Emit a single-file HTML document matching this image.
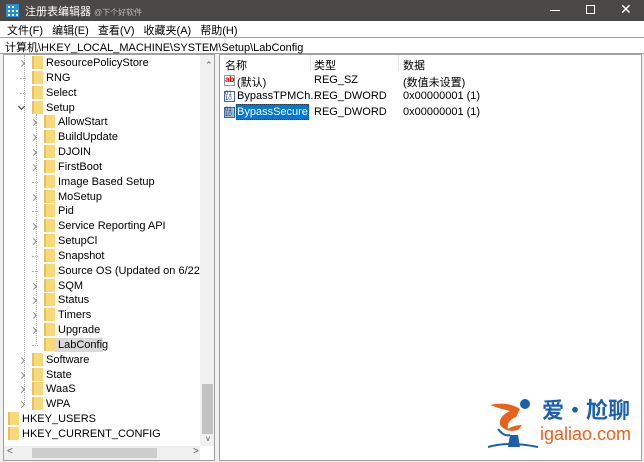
<!DOCTYPE html>
<html><head><meta charset="utf-8"><style>
*{margin:0;padding:0;box-sizing:border-box}
body{width:644px;height:462px;background:#f0f0f0;font-family:"Liberation Sans","Noto Sans CJK SC",sans-serif;font-size:11px;color:#000;position:relative;overflow:hidden}
.a{position:absolute;white-space:nowrap}
.f{position:absolute;width:11px;height:13px;background:#f8d979;border-left:2px solid #e9c15a}
.ch{position:absolute;width:5px;height:5px;border-right:1px solid #888;border-bottom:1px solid #888;transform:rotate(-45deg)}
.cv{position:absolute;width:5px;height:5px;border-right:1px solid #333;border-bottom:1px solid #333;transform:rotate(45deg)}
.hl{position:absolute;width:6px;border-top:1px dotted #aaa}
.t{position:absolute;line-height:15px;white-space:nowrap}
#clip{position:absolute;left:4px;top:55px;width:196px;height:391px;overflow:hidden}
</style></head><body>
<div class="a" style="left:0;top:0;width:644px;height:21px;background:#4a4846"></div>
<svg class="a" style="left:6px;top:4px" width="13" height="13"><rect x="0" y="0" width="13" height="13" fill="#2b8fd6"/><g fill="#fff"><rect x="2" y="2" width="2" height="2"/><rect x="6" y="2" width="2" height="2"/><rect x="2" y="6" width="2" height="2"/><rect x="6" y="6" width="2" height="2"/><rect x="10" y="6" width="2" height="2"/><rect x="2" y="10" width="2" height="2"/><rect x="6" y="10" width="2" height="2"/><rect x="10" y="10" width="2" height="2"/></g></svg>
<div class="a" style="left:25px;top:3px;color:#fff;font-size:11px">注册表编辑器 <span style="font-size:8px;color:#bbb">@下个好软件</span></div>
<div class="a" style="left:550px;top:10px;width:10px;border-top:1px solid #fff"></div>
<div class="a" style="left:586px;top:5px;width:9px;height:9px;border:1px solid #fff"></div>
<div class="a" style="left:620px;top:1px;color:#fff;font-size:14px">✕</div>
<div class="a" style="left:0;top:21px;width:644px;height:16px;background:#fff"></div>
<div class="a" style="left:7px;top:22px;word-spacing:6px">文件(F) 编辑(E) 查看(V) 收藏夹(A) 帮助(H)</div>
<div class="a" style="left:0;top:37px;width:644px;height:17px;background:#fff;border-top:1px solid #a0a0a0;border-bottom:1px solid #a0a0a0"></div>
<div class="a" style="left:5px;top:39px">计算机\HKEY_LOCAL_MACHINE\SYSTEM\Setup\LabConfig</div>
<div class="a" style="left:3px;top:54px;width:212px;height:407px;background:#fff;border:1px solid #a0a0a0"></div>
<div class="a" style="left:200px;top:55px;width:14px;height:391px;background:#f0f0f0"></div>
<div class="a" style="left:202px;top:384px;width:11px;height:50px;background:#c2c2c2"></div>
<div class="a" style="left:205px;top:60px;font-size:9px;color:#555">⌃</div>
<div class="a" style="left:206px;top:434px;font-size:8px;color:#555">v</div>
<div class="a" style="left:4px;top:446px;width:196px;height:14px;background:#f0f0f0"></div>
<div class="a" style="left:32px;top:448px;width:125px;height:10px;background:#cdcdcd"></div>
<div class="a" style="left:7px;top:446px;color:#555;font-size:10px">&lt;</div>
<div class="a" style="left:193px;top:446px;color:#555;font-size:10px">&gt;</div>
<div class="a" style="left:219px;top:54px;width:423px;height:407px;background:#fff;border:1px solid #a0a0a0"></div>
<div class="a" style="left:310px;top:55px;height:16px;border-left:1px solid #e5e5e5"></div>
<div class="a" style="left:398px;top:55px;height:16px;border-left:1px solid #e5e5e5"></div>
<div class="a" style="left:225px;top:57px">名称</div>
<div class="a" style="left:314px;top:57px">类型</div>
<div class="a" style="left:403px;top:57px">数据</div>
<div class="a" style="left:224px;top:75px;width:11px;height:11px;border:1px solid #999;font-size:8px;color:#d00;line-height:8px;font-weight:bold">ab</div>
<div class="a" style="left:237px;top:74px">(默认)</div><div class="a" style="left:314px;top:74px">REG_SZ</div><div class="a" style="left:403px;top:74px">(数值未设置)</div>
<div class="a" style="left:224px;top:91px;width:11px;height:11px;border:1px solid #46a;font-size:6px;color:#236;line-height:5px">01<br>10</div>
<div class="a" style="left:237px;top:90px">BypassTPMCh...</div><div class="a" style="left:314px;top:90px">REG_DWORD</div><div class="a" style="left:403px;top:90px">0x00000001 (1)</div>
<div class="a" style="left:224px;top:107px;width:11px;height:11px;border:1px solid #46a;font-size:6px;color:#236;line-height:5px;background:#9bc">01<br>10</div>
<div class="a" style="left:236px;top:104px;width:73px;height:16px;background:#0078d7;border:1px dotted #333"></div>
<div class="a" style="left:237px;top:106px;color:#fff">BypassSecure...</div><div class="a" style="left:314px;top:106px">REG_DWORD</div><div class="a" style="left:403px;top:106px">0x00000001 (1)</div>
<!-- tree -->
<div id="clip">
<div class="a" style="left:20px;top:0;height:348px;border-left:1px dotted #aaa"></div>
<div class="a" style="left:32px;top:59px;height:230px;border-left:1px dotted #aaa"></div>
<div class="a" style="left:51px;top:283px;width:48px;height:14px;background:#d9d9d9"></div>
<div id="tree"></div>
</div>
<script>
var R=[[1,1,"ResourcePolicyStore"],[1,0,"RNG"],[1,0,"Select"],[1,2,"Setup"],[2,1,"AllowStart"],[2,1,"BuildUpdate"],[2,1,"DJOIN"],[2,1,"FirstBoot"],[2,0,"Image Based Setup"],[2,1,"MoSetup"],[2,0,"Pid"],[2,1,"Service Reporting API"],[2,1,"SetupCl"],[2,0,"Snapshot"],[2,0,"Source OS (Updated on 6/22/202"],[2,1,"SQM"],[2,1,"Status"],[2,1,"Timers"],[2,1,"Upgrade"],[2,0,"LabConfig"],[1,1,"Software"],[1,1,"State"],[1,1,"WaaS"],[1,1,"WPA"],[0,-1,"HKEY_USERS"],[0,-1,"HKEY_CURRENT_CONFIG"]];
var h="";
R.forEach(function(r,i){var y=i*14.84;var fx=r[0]==0?4:(r[0]==1?28:40);var cx=fx-12;
if(r[1]==1)h+='<div class="ch" style="left:'+(cx-1)+'px;top:'+(y+6)+'px"></div>';
else if(r[1]==2)h+='<div class="cv" style="left:'+(cx-1)+'px;top:'+(y+4)+'px"></div>';
else if(r[1]==0)h+='<div class="hl" style="left:'+(cx)+'px;top:'+(y+8)+'px"></div>';
h+='<div class="f" style="left:'+fx+'px;top:'+(y+1)+'px"></div><div class="t" style="left:'+(fx+14)+'px;top:'+(y+1)+'px">'+r[2]+'</div>';});
document.getElementById("tree").innerHTML=h;
</script>
<!-- logo -->
<svg class="a" style="left:488px;top:395px" width="60" height="55"><circle cx="37" cy="9" r="5" fill="#1a5fb0"/><path d="M2 10 Q20 6 32 14 L28 22 Q18 26 20 34 Q26 30 34 30 L30 35 Q18 38 12 30 Q10 22 22 16 Q12 14 2 10Z" fill="#e8621c"/><path d="M10 34 Q16 42 22 40" stroke="#1a5fb0" stroke-width="2" fill="none"/><path d="M22 40 L30 40 L32 52 L20 52 Z" fill="#1a5fb0"/><path d="M0 52 Q20 46 50 52" stroke="#1a5fb0" stroke-width="2" fill="none"/></svg>
<div class="a" style="left:542px;top:396px;font-size:22px;color:#1a5fb0;font-family:'Noto Sans CJK SC',sans-serif;font-weight:bold;line-height:26px">爱·尬聊</div>
<div class="a" style="left:540px;top:424px;font-size:18px;color:#e8621c;line-height:20px">igaliao.com</div>
</body></html>
